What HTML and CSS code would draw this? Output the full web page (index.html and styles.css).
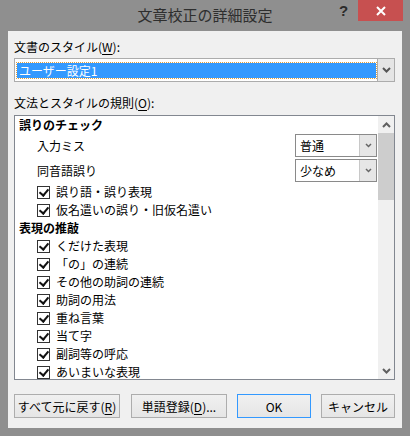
FILE: index.html
```html
<!DOCTYPE html>
<html lang="ja">
<head>
  <meta charset="UTF-8">
  <title>文章校正の詳細設定</title>
  <link rel="stylesheet" href="styles.css">
</head>
<body>
  <div class="window">
    <div class="titlebar">
      <span class="title">文章校正の詳細設定</span>
      <span class="help">?</span>
      <span class="close">
        <svg width="10" height="10" viewBox="0 0 10 10"><path d="M1 1 L9 9 M9 1 L1 9" stroke="#fff" stroke-width="2"/></svg>
      </span>
    </div>

    <div class="panel">
      <div class="label">文書のスタイル(<u>W</u>):</div>
      <div class="select">
        <div class="select-value"><span>ユーザー設定1</span></div>
        <div class="drop-btn">
          <svg width="9" height="6" viewBox="0 0 9 6"><path d="M1 1 L4.5 4.5 L8 1" fill="none" stroke="#555" stroke-width="2"/></svg>
        </div>
      </div>

      <div class="label label-rules">文法とスタイルの規則(<u>O</u>):</div>
      <div class="listbox">
        <div class="list-items">
          <div class="group group-first">誤りのチェック</div>
          <div class="combo-row">
            <span>入力ミス</span>
            <div class="combo">
              <span class="combo-text">普通</span>
              <span class="combo-btn">
                <svg width="7" height="5" viewBox="0 0 7 5"><path d="M1 1 L3.5 3.5 L6 1" fill="none" stroke="#666" stroke-width="1.5"/></svg>
              </span>
            </div>
          </div>
          <div class="combo-row">
            <span>同音語誤り</span>
            <div class="combo">
              <span class="combo-text">少なめ</span>
              <span class="combo-btn">
                <svg width="7" height="5" viewBox="0 0 7 5"><path d="M1 1 L3.5 3.5 L6 1" fill="none" stroke="#666" stroke-width="1.5"/></svg>
              </span>
            </div>
          </div>
          <div class="check-row"><span class="box"></span>誤り語・誤り表現</div>
          <div class="check-row"><span class="box"></span>仮名遣いの誤り・旧仮名遣い</div>
          <div class="group">表現の推敲</div>
          <div class="check-row"><span class="box"></span>くだけた表現</div>
          <div class="check-row"><span class="box"></span>「の」の連続</div>
          <div class="check-row"><span class="box"></span>その他の助詞の連続</div>
          <div class="check-row"><span class="box"></span>助詞の用法</div>
          <div class="check-row"><span class="box"></span>重ね言葉</div>
          <div class="check-row"><span class="box"></span>当て字</div>
          <div class="check-row"><span class="box"></span>副詞等の呼応</div>
          <div class="check-row"><span class="box"></span>あいまいな表現</div>
        </div>
        <div class="scrollbar">
          <div class="arrow">
            <svg width="9" height="6" viewBox="0 0 9 6"><path d="M1 5 L4.5 1.5 L8 5" fill="none" stroke="#606060" stroke-width="2"/></svg>
          </div>
          <div class="thumb"></div>
          <div class="track"></div>
          <div class="arrow">
            <svg width="9" height="6" viewBox="0 0 9 6"><path d="M1 1 L4.5 4.5 L8 1" fill="none" stroke="#606060" stroke-width="2"/></svg>
          </div>
        </div>
      </div>

      <div class="buttons">
        <button class="btn btn-reset">すべて元に戻す(<u>R</u>)</button>
        <button class="btn btn-dict">単語登録(<u>D</u>)...</button>
        <button class="btn btn-ok">OK</button>
        <button class="btn btn-cancel">キャンセル</button>
      </div>
    </div>
  </div>
</body>
</html>
```

FILE: styles.css
```css
body {
  margin: 0;
  background-color: #8f8f8f;
  font-family: "Noto Sans CJK JP", "Noto Sans", sans-serif;
  font-size: 12px;
  color: #000;
}

.window {
  width: 410px;
  height: 436px;
  background-color: #8f8f8f;
}

.titlebar {
  position: relative;
  height: 31px;
  text-align: center;
}

.title {
  display: inline-block;
  margin-top: 5px;
  font-size: 15px;
  line-height: 20px;
  color: #2e2e2e;
}

.help {
  position: absolute;
  left: 339px;
  top: 2px;
  font-family: "Liberation Sans", sans-serif;
  font-size: 15px;
  font-weight: bold;
  color: #2b2b2b;
}

.close {
  position: absolute;
  left: 358px;
  top: 0;
  width: 45px;
  height: 21px;
  background-color: #c75050;
  display: flex;
  align-items: center;
  justify-content: center;
}

.panel {
  margin: 0 8px;
  height: 397px;
  box-sizing: border-box;
  padding: 8px 7px 10px 6px;
  background-color: #f0f0f0;
}

.label {
  height: 16px;
  line-height: 16px;
}

.label-rules {
  margin-top: 13px;
}

u {
  text-decoration-thickness: 1px;
  text-underline-offset: 2px;
}

.select {
  margin-top: 3px;
  height: 24px;
  box-sizing: border-box;
  border: 1px solid #acacac;
  background-color: #fff;
  display: flex;
}

.select-value {
  flex: 1;
  padding: 4px 1px 3px 2px;
}

.select-value span {
  display: block;
  height: 15px;
  line-height: 15px;
  box-sizing: border-box;
  padding-left: 2px;
  background-color: #3399ff;
  color: #fff;
  outline: 1px dotted #e0a040;
}

.drop-btn {
  width: 16px;
  background-color: #e5e5e5;
  border-left: 1px solid #acacac;
  display: flex;
  align-items: center;
  justify-content: center;
}

.listbox {
  margin-top: 4px;
  height: 265px;
  box-sizing: border-box;
  border: 1px solid #828790;
  background-color: #fff;
  display: flex;
}

.list-items {
  flex: 1;
  padding-left: 4px;
  overflow: hidden;
}

.group {
  height: 18px;
  line-height: 18px;
  font-weight: bold;
}

.group-first {
  height: 17px;
  line-height: 17px;
}

.combo-row {
  height: 25px;
  display: flex;
  align-items: center;
  justify-content: space-between;
  padding-left: 18px;
}

.combo {
  width: 82px;
  height: 23px;
  box-sizing: border-box;
  border: 1px solid #8a8a8a;
  margin-right: 1px;
  display: flex;
}

.combo-text {
  flex: 1;
  line-height: 21px;
  padding-left: 4px;
}

.combo-btn {
  width: 16px;
  background-color: #e6e6e6;
  border-left: 1px solid #c8c8c8;
  display: flex;
  align-items: center;
  justify-content: center;
}

.check-row {
  height: 18px;
  line-height: 18px;
  padding-left: 18px;
  display: flex;
  align-items: center;
}

.box {
  width: 13px;
  height: 13px;
  box-sizing: border-box;
  border: 1px solid #333;
  margin-right: 6px;
  position: relative;
}

.box::after {
  content: "";
  position: absolute;
  left: 3px;
  top: 0px;
  width: 4px;
  height: 7px;
  border: solid #111;
  border-width: 0 2px 2px 0;
  transform: rotate(40deg);
}

.scrollbar {
  width: 16px;
  background-color: #f0f0f0;
  display: flex;
  flex-direction: column;
}

.arrow {
  height: 17px;
  display: flex;
  align-items: center;
  justify-content: center;
}

.thumb {
  height: 67px;
  background-color: #cdcdcd;
}

.track {
  flex: 1;
}

.buttons {
  margin-top: 14px;
  display: flex;
}

.btn {
  height: 24px;
  padding: 0;
  border: 1px solid #adadad;
  background: linear-gradient(#f0f0f0, #e5e5e5);
  font-family: inherit;
  font-size: 12px;
  color: #000;
}

.btn-reset {
  width: 106px;
}

.btn-dict {
  width: 96px;
  margin-left: 11px;
}

.btn-ok {
  width: 74px;
  margin-left: 10px;
  border-color: #3399ff;
}

.btn-cancel {
  width: 74px;
  margin-left: 10px;
}
```
